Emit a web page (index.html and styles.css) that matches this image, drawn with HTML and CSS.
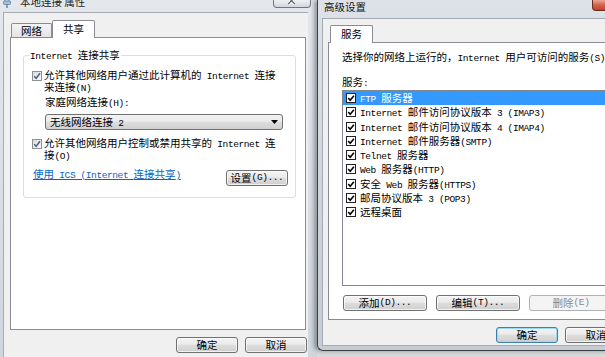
FILE: index.html
```html
<!DOCTYPE html>
<html lang="zh-CN">
  <head>
    <meta charset="UTF-8" />
    <title>本地连接 属性 / 高级设置</title>
    <link rel="stylesheet" href="styles.css">
  </head>
  <body>
    <div class="win win-left">
      <div class="tbar">
        <div class="ttl">
          <svg class="ico" viewBox="0 0 8 10" width="8" height="10">
            <path d="M2 0v3M6 0v3" stroke="#6a8fb5" stroke-width="1.2"/>
            <rect x="0.5" y="3" width="7" height="3.5" rx="1" fill="#9fc0de" stroke="#5d82a8" stroke-width="0.8"/>
            <path d="M4 6.5V10" stroke="#5d82a8" stroke-width="1.4"/>
          </svg>
          <span>本地连接 属性</span>
        </div>
        <div class="close">
          <svg viewBox="0 0 38 8" width="38" height="8">
            <path d="M15 -3L22 4M22 -3L15 4" stroke="#fff" stroke-width="3"/>
            <path d="M15 -3L22 4M22 -3L15 4" stroke="#5f6266" stroke-width="1.3"/>
          </svg>
        </div>
      </div>
      <div class="client client-left">
        <div class="tabs">
          <div class="tab">网络</div>
          <div class="tab on">共享</div>
        </div>
        <div class="panel panel-left">
          <div class="group">
            <div class="legend"><span class="m">Internet </span>连接共享</div>
            <div class="chk-row first">
              <span class="cb"><svg viewBox="0 0 8 8"><path d="M1.2 4.2L3.2 6.4L6.9 1.3" fill="none" stroke="#4b5d8c" stroke-width="1.5"/></svg></span>
              <div class="lbl">允许其他网络用户通过此计算机的<span class="m"> Internet </span>连接<br>来连接<span class="m">(N)</span></div>
            </div>
            <div class="home">家庭网络连接<span class="m">(H):</span></div>
            <div class="combo">
              <span>无线网络连接<span class="m"> 2</span></span>
              <svg viewBox="0 0 7 4" width="7" height="4"><path d="M0 0H7L3.5 4Z" fill="#000"/></svg>
            </div>
            <div class="chk-row second">
              <span class="cb"><svg viewBox="0 0 8 8"><path d="M1.2 4.2L3.2 6.4L6.9 1.3" fill="none" stroke="#4b5d8c" stroke-width="1.5"/></svg></span>
              <div class="lbl">允许其他网络用户控制或禁用共享的<span class="m"> Internet </span>连<br>接<span class="m">(O)</span></div>
            </div>
            <div class="link-row">
              <a class="link" href="#">使用<span class="m"> ICS (Internet </span>连接共享<span class="m">)</span></a>
              <div class="btn set">设置<span class="m">(G)...</span></div>
            </div>
          </div>
        </div>
        <div class="btns">
          <div class="btn">确定</div>
          <div class="btn">取消</div>
        </div>
      </div>
    </div>

    <div class="win win-right">
      <div class="tbar">
        <div class="ttl">高级设置</div>
        <div class="close red"></div>
      </div>
      <div class="client client-right">
        <div class="tabs">
          <div class="tab on">服务</div>
        </div>
        <div class="panel panel-right">
          <div class="intro">选择你的网络上运行的，<span class="m">Internet </span>用户可访问的服务<span class="m">(S)</span>。</div>
          <div class="svc-label">服务<span class="m">:</span></div>
          <div class="list">
            <div class="item sel"><svg class="lcb" viewBox="0 0 10 10"><rect x="0.5" y="0.5" width="9" height="9" fill="#fff" stroke="#222"/><path d="M2.2 5L4.2 7.2L7.9 2.8" fill="none" stroke="#000" stroke-width="1.6"/></svg><span><span class="m">FTP </span>服务器</span></div>
            <div class="item"><svg class="lcb" viewBox="0 0 10 10"><rect x="0.5" y="0.5" width="9" height="9" fill="#fff" stroke="#222"/><path d="M2.2 5L4.2 7.2L7.9 2.8" fill="none" stroke="#000" stroke-width="1.6"/></svg><span><span class="m">Internet </span>邮件访问协议版本<span class="m"> 3 (IMAP3)</span></span></div>
            <div class="item"><svg class="lcb" viewBox="0 0 10 10"><rect x="0.5" y="0.5" width="9" height="9" fill="#fff" stroke="#222"/><path d="M2.2 5L4.2 7.2L7.9 2.8" fill="none" stroke="#000" stroke-width="1.6"/></svg><span><span class="m">Internet </span>邮件访问协议版本<span class="m"> 4 (IMAP4)</span></span></div>
            <div class="item"><svg class="lcb" viewBox="0 0 10 10"><rect x="0.5" y="0.5" width="9" height="9" fill="#fff" stroke="#222"/><path d="M2.2 5L4.2 7.2L7.9 2.8" fill="none" stroke="#000" stroke-width="1.6"/></svg><span><span class="m">Internet </span>邮件服务器<span class="m">(SMTP)</span></span></div>
            <div class="item"><svg class="lcb" viewBox="0 0 10 10"><rect x="0.5" y="0.5" width="9" height="9" fill="#fff" stroke="#222"/><path d="M2.2 5L4.2 7.2L7.9 2.8" fill="none" stroke="#000" stroke-width="1.6"/></svg><span><span class="m">Telnet </span>服务器</span></div>
            <div class="item"><svg class="lcb" viewBox="0 0 10 10"><rect x="0.5" y="0.5" width="9" height="9" fill="#fff" stroke="#222"/><path d="M2.2 5L4.2 7.2L7.9 2.8" fill="none" stroke="#000" stroke-width="1.6"/></svg><span><span class="m">Web </span>服务器<span class="m">(HTTP)</span></span></div>
            <div class="item"><svg class="lcb" viewBox="0 0 10 10"><rect x="0.5" y="0.5" width="9" height="9" fill="#fff" stroke="#222"/><path d="M2.2 5L4.2 7.2L7.9 2.8" fill="none" stroke="#000" stroke-width="1.6"/></svg><span>安全<span class="m"> Web </span>服务器<span class="m">(HTTPS)</span></span></div>
            <div class="item"><svg class="lcb" viewBox="0 0 10 10"><rect x="0.5" y="0.5" width="9" height="9" fill="#fff" stroke="#222"/><path d="M2.2 5L4.2 7.2L7.9 2.8" fill="none" stroke="#000" stroke-width="1.6"/></svg><span>邮局协议版本<span class="m"> 3 (POP3)</span></span></div>
            <div class="item"><svg class="lcb" viewBox="0 0 10 10"><rect x="0.5" y="0.5" width="9" height="9" fill="#fff" stroke="#222"/><path d="M2.2 5L4.2 7.2L7.9 2.8" fill="none" stroke="#000" stroke-width="1.6"/></svg><span>远程桌面</span></div>
          </div>
          <div class="list-btns">
            <div class="btn wide">添加<span class="m">(D)...</span></div>
            <div class="btn wide">编辑<span class="m">(T)...</span></div>
            <div class="btn wide dis">删除<span class="m">(E)</span></div>
          </div>
        </div>
        <div class="btns">
          <div class="btn def">确定</div>
          <div class="btn">取消</div>
        </div>
      </div>
    </div>
  </body>
</html>
```

FILE: styles.css
```css
* {
  margin: 0;
  padding: 0;
  box-sizing: border-box;
}
body {
  width: 605px;
  height: 357px;
  overflow: hidden;
  display: flex;
  align-items: flex-start;
  background: #d9dadc;
  font-family: "Noto Sans CJK SC", sans-serif;
  font-size: 10.5px;
  line-height: 12px;
  color: #000;
}
.m {
  font-family: "Liberation Mono", monospace;
  font-size: 9.5px;
  line-height: 8px;
  letter-spacing: -0.4px;
}

/* window frames */
.win {
  flex: none;
  display: flex;
  flex-direction: column;
  background: linear-gradient(#e4e8ed, #d8dde3 60%, #d0d6dd);
}
.win-left {
  width: 317px;
  height: 357px;
}
.win-right {
  width: 323px;
  height: 351px;
  border-left: 1px solid #3d4044;
  border-bottom: 1px solid #3d4044;
  border-bottom-left-radius: 6px;
  box-shadow: -3px 0 4px rgba(0, 0, 0, 0.35);
  background: linear-gradient(#dde2e8, #cdd3da 60%, #c6ccd3);
}
.tbar {
  flex: none;
  display: flex;
  align-items: flex-start;
  overflow: hidden;
}
.win-left .tbar {
  height: 12px;
}
.win-right .tbar {
  height: 18px;
  background: radial-gradient(40px 6px at 440px 15px, rgba(120, 160, 210, 0.35), transparent),
    radial-gradient(30px 5px at 495px 14px, rgba(120, 160, 210, 0.3), transparent);
}
.win-left .ttl {
  display: flex;
  align-items: center;
  gap: 9px;
  margin-top: -4px;
  padding-left: 3px;
  color: #1e1e1e;
}
.ico {
  margin-top: 2px;
}
.win-right .ttl {
  padding: 1px 0 0 6px;
  color: #111;
}
.close {
  margin-left: auto;
  margin-right: 6px;
  width: 38px;
  height: 8px;
  border: 1px solid #72767b;
  border-top: 0;
  border-radius: 0 0 4px 4px;
  background: linear-gradient(#eef0f3, #d2d7dd);
  display: flex;
}
.close.red {
  margin-right: 8px;
  width: 40px;
  height: 11px;
  border-color: #6d2a1e;
  background: linear-gradient(#e9a898, #d4614a 50%, #c2412a);
}

/* client areas */
.client {
  flex: 1;
  display: flex;
  flex-direction: column;
  background: #f0f0f0;
  border-top: 1px solid #a4abb3;
  border-left: 1px solid #a4abb3;
}
.client-left {
  margin: 0 9px 0 3px;
  padding: 7px 1px 0 6px;
}
.client-right {
  flex: none;
  height: 328px;
  margin: 0 6px 0 4px;
  border-right: 1px solid #a4abb3;
  border-bottom: 1px solid #a4abb3;
  padding: 6px 6px 0 5px;
}

/* tabs */
.tabs {
  display: flex;
  align-items: flex-end;
  height: 18px;
  margin-bottom: -1px;
  padding-left: 1px;
}
.client-right .tabs {
  padding-left: 2px;
}
.tab {
  height: 14px;
  margin-bottom: 1px;
  padding: 0 9px;
  border: 1px solid #898c95;
  border-bottom: 0;
  border-radius: 2px 2px 0 0;
  background: linear-gradient(#f4f4f4, #e4e4e4);
  line-height: 13px;
}
.tab.on {
  position: relative;
  z-index: 1;
  height: 18px;
  margin-bottom: 0;
  padding: 0 10px;
  background: #fff;
  line-height: 15px;
}
.panel {
  flex: none;
  background: #fff;
  border: 1px solid #898c95;
  margin-right: 1px;
}
.panel-left {
  height: 293px;
  padding: 17px 9px 0 12px;
}
.panel-right {
  height: 278px;
  padding: 8px 12px 0 13px;
  display: flex;
  flex-direction: column;
}

/* group box */
.group {
  display: flex;
  flex-direction: column;
  border: 1px solid #d5dfe5;
  border-radius: 3px;
  padding: 0 7px 11px 8px;
}
.legend {
  align-self: flex-start;
  margin: -7px 0 0 -3px;
  padding: 0 1px;
  background: #fff;
}
.chk-row {
  display: flex;
  gap: 2px;
  margin-top: 8px;
  white-space: nowrap;
}
.chk-row.second {
  margin-top: 7px;
}
.cb {
  flex: none;
  width: 10px;
  height: 10px;
  margin-top: 2px;
  border: 1px solid #8e8f8f;
  background: linear-gradient(135deg, #d6d9df, #fbfbfb);
  display: flex;
}
.cb svg {
  width: 8px;
  height: 8px;
}
.home {
  margin: 3px 0 0 13px;
}
.combo {
  display: flex;
  align-items: center;
  justify-content: space-between;
  height: 16px;
  margin: 6px 5px 0 13px;
  padding: 0 4px 0 4px;
  border: 1px solid #707070;
  border-radius: 3px;
  background: linear-gradient(#f3f3f3, #ebebeb 45%, #dddddd 50%, #d1d1d1);
}
.link-row {
  display: flex;
  align-items: flex-start;
  margin-top: 9px;
}
.link {
  margin: -2px 0 0 1px;
  color: #0066cc;
  text-decoration: underline;
}
.set {
  margin-left: auto;
}

/* buttons */
.btns {
  display: flex;
  justify-content: flex-end;
  gap: 7px;
  margin-top: 7px;
}
.btn {
  width: 62px;
  height: 16px;
  display: flex;
  align-items: center;
  justify-content: center;
  border: 1px solid #707070;
  border-radius: 3px;
  background: linear-gradient(#f3f3f3, #ebebeb 45%, #dddddd 50%, #cfcfcf);
  box-shadow: inset 0 0 0 1px rgba(255, 255, 255, 0.7);
  white-space: nowrap;
}
.btn.def {
  border-color: #3c7fb1;
  box-shadow: inset 0 0 0 1px #9ad8f5;
}
.btn.wide {
  width: 84px;
}
.btn.dis {
  border-color: #adb2b5;
  background: #f4f4f4;
  box-shadow: none;
  color: #8a8a8a;
}

/* services list */
.intro,
.svc-label {
  white-space: nowrap;
}
.svc-label {
  margin-top: 13px;
}
.list {
  height: 196px;
  margin-top: 2px;
  border: 1px solid #828790;
  background: #fff;
}
.item {
  display: flex;
  align-items: center;
  gap: 4px;
  height: 14.25px;
  padding-left: 3px;
  white-space: nowrap;
}
.item.sel {
  background: #3399ff;
  color: #fff;
}
.lcb {
  flex: none;
  width: 10px;
  height: 10px;
}
.list-btns {
  display: flex;
  gap: 9px;
  margin-top: 9px;
  padding-left: 1px;
}
```
